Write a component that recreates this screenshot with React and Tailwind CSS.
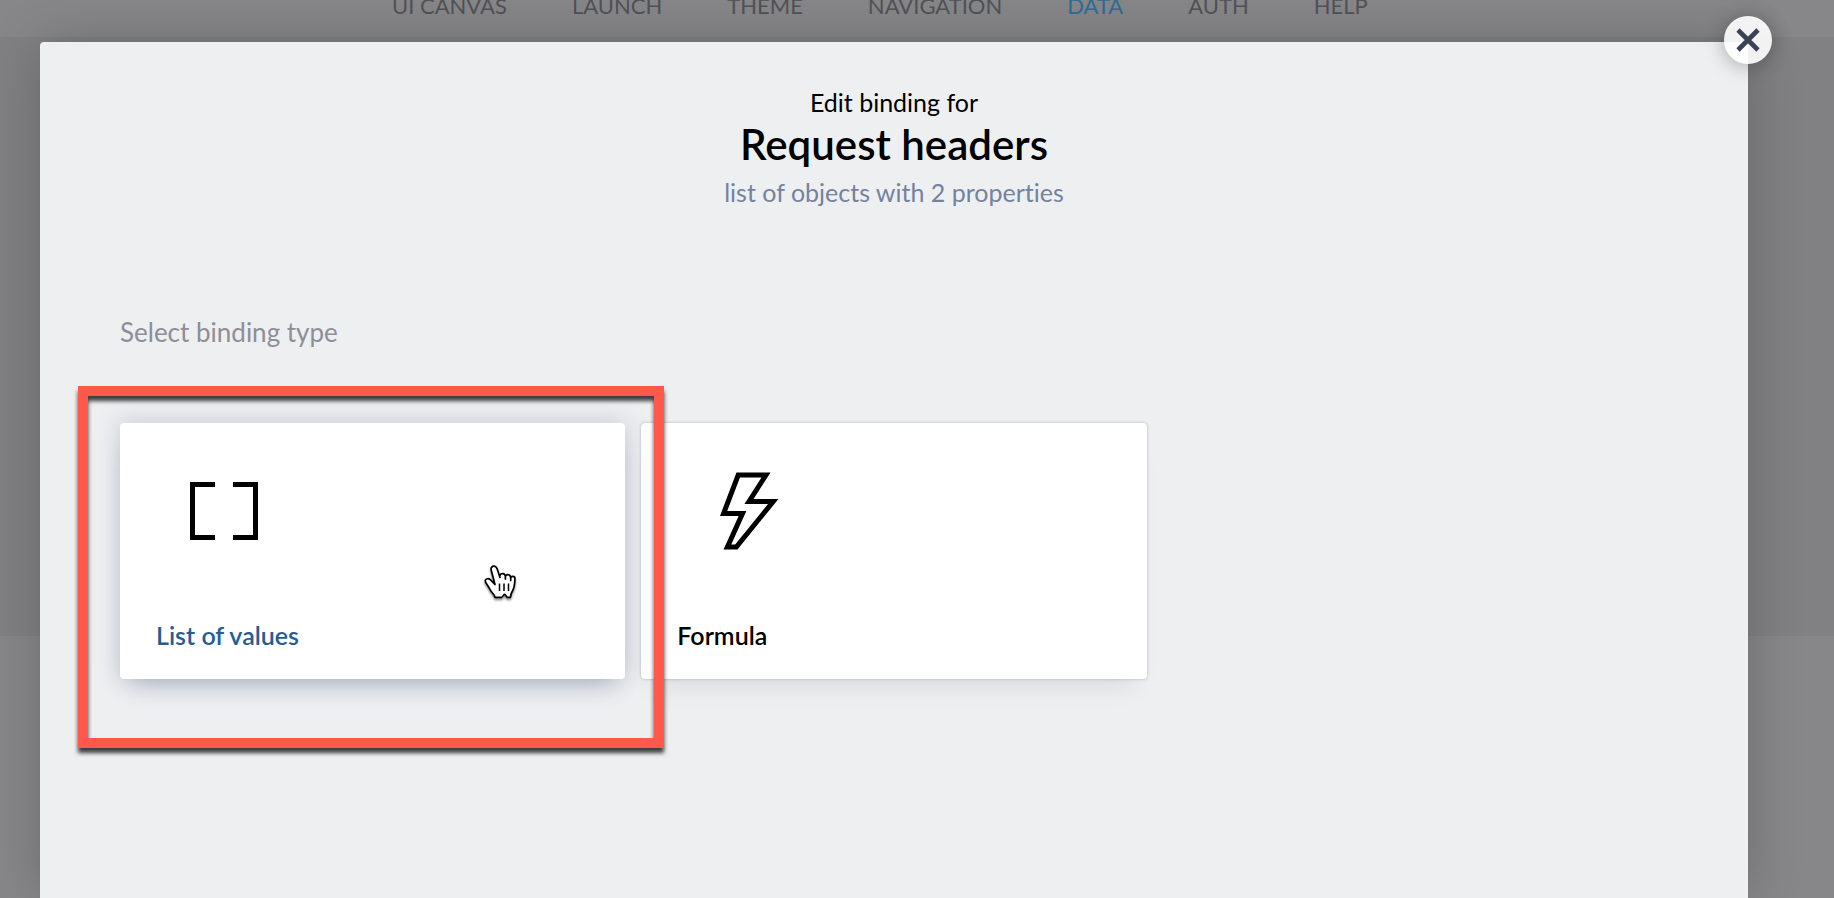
const NAV_ITEMS = ['UI CANVAS', 'LAUNCH', 'THEME', 'NAVIGATION', 'DATA', 'AUTH', 'HELP'];

function BracketsIcon() {
  return (
    <svg width="144" height="104" viewBox="0 0 144 104" fill="none" stroke="black" strokeWidth="5" aria-hidden="true">
      <path d="M59 25.5H36.5V78.5H59M77 25.5H99.5V78.5H77" />
    </svg>
  );
}

function BoltIcon() {
  return (
    <svg width="144" height="104" viewBox="0 0 144 104" fill="none" stroke="black" strokeWidth="5" aria-hidden="true">
      <path d="M61.2 16H89L72 42.5H96.2L59.3 88H50.4L65.5 54.5H46.6Z" />
    </svg>
  );
}

function HandCursor() {
  return (
    <svg className="drop-shadow-[0_2px_1px_rgba(0,0,0,0.45)]" width="32" height="34" viewBox="0 0 32 34" fill="none" aria-hidden="true">
      <path
        d="M11.2 20.6C10 19.2 8.600 16.600 6.300 14.700C4.800 13.400 2.200 13.300 1.400 15C0.800 16.500 1.800 18 3 19.500C5 22 6.200 25.500 8.500 28C10 29.500 10.500 30.500 11 32.300H17.600C18.600 32.300 19.500 29.300 20.600 29.300C21.700 29.300 22.400 32.300 23.400 32.300H26.500C26.400 29.500 27.500 27.500 28.700 25.500C30.300 22.500 30.800 19.500 30.900 13.500C30.900 10.800 27.200 10.600 26.700 13C26.500 9 22 8.700 21.400 11.500C21 8 16.500 7.800 15.900 10.500L13.500 4C12.600 1.500 11.400 0.800 9.600 1.100C7.500 1.600 6.700 3.400 7.300 5.500Z"
        fill="white"
      />
      <path
        d="M11 19.500L7.300 5.500C6.700 3.400 7.500 1.600 9.300 1.100C11.200 0.800 12.400 1.700 13.200 4L16 12.500M15.900 10.500C16.500 7.800 21 8 21.400 11.500V14M21.400 11.500C22 8.700 26.500 9 26.700 13V15.500M26.700 13C27.200 10.600 30.900 10.800 30.900 13.500C30.800 19.500 30.300 22.500 28.700 25.500C27.500 27.500 26.400 29.500 26.500 32.300H23.400C22.400 32.300 21.700 29.300 20.600 29.300C19.500 29.300 18.600 32.300 17.600 32.300H11C10.500 30.500 10 29.500 8.500 28C6.200 25.500 5 22 3 19.500C1.800 18 0.800 16.500 1.400 15C2.200 13.300 4.800 13.400 6.300 14.700L11 19.500"
        stroke="black"
        strokeWidth="1.7"
        strokeLinejoin="round"
        strokeLinecap="round"
      />
      <path d="M15.500 18.500V26M20 18.500V26M24.500 18.500V26" stroke="black" strokeWidth="1.500" />
    </svg>
  );
}

export default function App() {
  return (
    <div className="relative flex h-screen flex-col overflow-hidden bg-[#878789] font-[Lato,'Open_Sans',sans-serif] text-black [font-variant-ligatures:none]">
      <header className="flex h-[37px] shrink-0 items-end pb-[21px]">
        <nav className="flex gap-[65px] pl-[392px] text-[22px] leading-5 whitespace-nowrap text-[#515256]">
          {NAV_ITEMS.map((item) => (
            <a key={item} href="#" className={item === 'DATA' ? 'text-[#2d6d95]' : ''}>
              {item}
            </a>
          ))}
        </nav>
      </header>
      <div className="h-[599px] shrink-0 bg-[#818183]" />

      <div className="absolute inset-0 flex pt-[42px] pr-[86px] pl-10">
        <section
          role="dialog"
          aria-labelledby="binding-title"
          className="relative flex-1 rounded-t bg-[#eeeff1] px-20 pt-12 shadow-[0_0_56px_rgba(0,0,0,0.2)]"
        >
          <button
            type="button"
            aria-label="Close"
            className="absolute -top-[26px] -right-6 flex size-12 items-center justify-center rounded-full bg-white/90 shadow-[0_2px_20px_rgba(0,0,0,0.3)]"
          >
            <svg width="24" height="24" viewBox="0 0 24 24" stroke="#3b4256" strokeWidth="4.6" aria-hidden="true">
              <path d="M2 2L22 22M22 2L2 22" />
            </svg>
          </button>

          <div className="text-center">
            <p className="text-[25px] leading-6">Edit binding for</p>
            <h1 id="binding-title" className="text-[42px] leading-[60px] font-semibold">
              Request headers
            </h1>
            <p className="text-[25px] leading-9 text-[#74829f]">list of objects with 2 properties</p>
          </div>

          <h2 className="mt-[104px] text-[26px] leading-9 text-[#8d8e96]">Select binding type</h2>

          <div className="mt-[73px] grid grid-cols-3 gap-4">
            <div className="relative">
              <button
                type="button"
                className="flex h-64 w-full flex-col items-start justify-between rounded bg-white px-9 pt-9 pb-7 text-left shadow-[0_0_24px_rgba(90,105,140,0.3),0_16px_24px_-12px_rgba(70,85,120,0.3)]"
              >
                <BracketsIcon />
                <span className="text-[25px] leading-8 font-semibold text-[#245d94]">List of values</span>
              </button>
              <div className="pointer-events-none absolute top-[142px] left-[364px]">
                <HandCursor />
              </div>
              <div className="pointer-events-none absolute -top-[37px] -right-[39px] -bottom-[69px] -left-[42px] z-10 border-[10px] border-[#ff594b] drop-shadow-[0_5px_2px_rgba(0,0,0,0.75)]" />
            </div>
            <button
              type="button"
              className="flex h-64 flex-col items-start justify-between rounded bg-white px-9 pt-9 pb-7 text-left shadow-[0_0_3px_rgba(90,105,140,0.45),0_20px_24px_-12px_rgba(0,0,0,0.08)]"
            >
              <BoltIcon />
              <span className="text-[25px] leading-8 font-semibold">Formula</span>
            </button>
          </div>
        </section>
      </div>
    </div>
  );
}
